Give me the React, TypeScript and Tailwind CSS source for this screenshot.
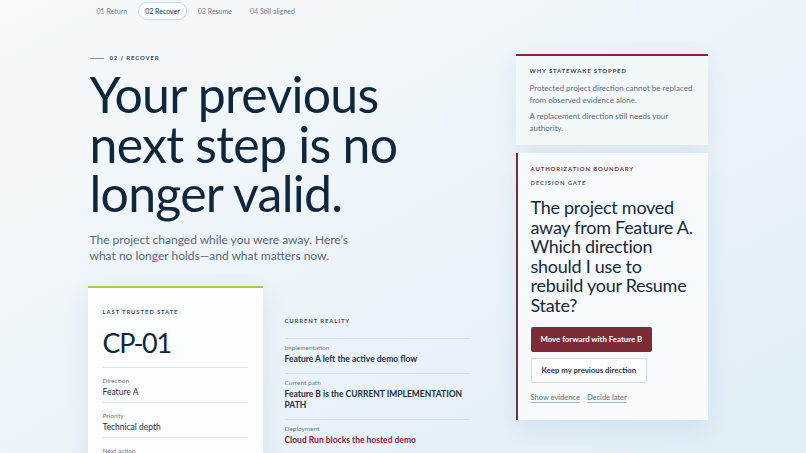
import React from 'react';

const steps = [
  { id: '01', label: 'Return' },
  { id: '02', label: 'Recover', active: true },
  { id: '03', label: 'Resume' },
  { id: '04', label: 'Still aligned' },
];

const trusted = [
  { label: 'Direction', value: 'Feature A' },
  { label: 'Priority', value: 'Technical depth' },
  { label: 'Next action', value: 'Continue Feature A' },
];

const reality = [
  { label: 'Implementation', value: 'Feature A left the active demo flow' },
  { label: 'Current path', value: 'Feature B is the CURRENT IMPLEMENTATION PATH' },
  { label: 'Deployment', value: 'Cloud Run blocks the hosted demo', alert: true },
];

const question = [
  'The project moved',
  'away from Feature A.',
  'Which direction',
  'should I use to',
  'rebuild your Resume',
  'State?',
];

const Eyebrow: React.FC<{ children: React.ReactNode; className?: string }> = ({ children, className }) => (
  <div className={`text-[6px] font-bold uppercase leading-[8px] tracking-[0.14em] ${className ?? 'text-[#3f4f63]'}`}>
    {children}
  </div>
);

export default function App() {
  return (
    <div className="min-h-[892px] w-full bg-[linear-gradient(150deg,#f7f9fb_0%,#ecf4f9_35%,#dfeef7_65%,#d8e9f3_100%)] font-['Lato',sans-serif] text-[#12263b]">
      <div className="w-[797px]">
        <div className="mx-auto w-[618px] pt-[2px]">
          <nav className="flex gap-[4px]">
            {steps.map((s) => (
              <span
                key={s.id}
                className={`flex h-[18px] items-center rounded-full border px-[6px] text-[7px] ${
                  s.active ? 'border-[#cfd9e2] bg-white/70 text-[#1f3348]' : 'border-transparent text-[#6b7a8a]'
                }`}
              >
                {s.id} {s.label}
              </span>
            ))}
          </nav>

          <div className="mt-[34px] grid grid-cols-[380px_192px] gap-x-[46px]">
            <div>
              <div className="flex items-center gap-[6px]">
                <span className="h-px w-[14px] bg-[#8d86c4]" />
                <Eyebrow className="text-[#34465b]">02 / Recover</Eyebrow>
              </div>

              <h1 className="mt-[8px] text-[50px] font-normal leading-[49.5px] tracking-[-0.015em] text-[#10263d]">
                Your previous
                <br />
                next step is no
                <br />
                longer valid.
              </h1>

              <p className="mt-[13px] text-[12px] leading-[16px] text-[#56677a]">
                The project changed while you were away. Here’s
                <br />
                what no longer holds—and what matters now.
              </p>

              <div className="mt-[22px] -ml-[2px] flex gap-[22px]">
                <div className="w-[175px] border-t-2 border-[#a8c95a] bg-[#fcfdfe] px-[15px] pb-[30px] pt-[20px] shadow-[0_8px_24px_rgba(30,60,90,0.09)]">
                  <Eyebrow>Last trusted state</Eyebrow>
                  <div className="mt-[11px] text-[27px] leading-[32px] tracking-[-0.05em] text-[#10263d]">CP-01</div>
                  <div className="mt-[8px]">
                    {trusted.map((row) => (
                      <div key={row.label} className="border-t border-[#dfe6ec] pb-[3px] pt-[8px]">
                        <div className="text-[6.5px] leading-[10px] text-[#6b7a8a]">{row.label}</div>
                        <div className="text-[8.5px] leading-[13px] text-[#1c2f44]">{row.value}</div>
                      </div>
                    ))}
                  </div>
                </div>

                <div className="flex-1 pt-[31px]">
                  <Eyebrow>Current reality</Eyebrow>
                  <div className="mt-[13px]">
                    {reality.map((row) => (
                      <div key={row.label} className="border-t border-[#d3dde6] pb-[8px] pt-[4px]">
                        <div className="text-[6.5px] leading-[10px] text-[#6b7a8a]">{row.label}</div>
                        <div
                          className={`mt-[1px] text-[8.5px] font-bold leading-[11px] ${
                            row.alert ? 'text-[#7f2a37]' : 'text-[#1c2f44]'
                          }`}
                        >
                          {row.value}
                        </div>
                      </div>
                    ))}
                  </div>
                </div>
              </div>
            </div>

            <div className="flex flex-col gap-[8px]">
              <section className="border-t-2 border-[#7f2a37] bg-[#f3f8fb] px-[14px] pb-[11px] pt-[11px] shadow-[0_8px_24px_rgba(30,60,90,0.08)]">
                <Eyebrow className="text-[#34465b]">Why StateWake stopped</Eyebrow>
                <p className="mt-[7px] text-[8px] leading-[12px] text-[#5b6b7c]">
                  Protected project direction cannot be replaced from observed evidence alone.
                </p>
                <p className="mt-[4px] text-[8px] leading-[12px] text-[#5b6b7c]">
                  A replacement direction still needs your authority.
                </p>
              </section>

              <section className="border-l-2 border-[#7f2a37] bg-[#f7fafc] pb-[17px] pl-[13px] pr-[4px] pt-[12px] shadow-[0_8px_24px_rgba(30,60,90,0.08)]">
                <Eyebrow className="text-[#7f2a37]">Authorization boundary</Eyebrow>
                <Eyebrow className="mt-[6px] text-[#4a5a6d]">Decision gate</Eyebrow>
                <h2 className="mt-[11px] text-[18px] font-normal leading-[19.5px] tracking-[-0.015em] text-[#17293d]">
                  {question.map((line) => (
                    <span key={line} className="block whitespace-nowrap">
                      {line}
                    </span>
                  ))}
                </h2>
                <button className="mt-[12px] flex h-[25px] items-center rounded-[2px] bg-[#7d2b37] px-[10px] text-[7.8px] font-bold text-white">
                  Move forward with Feature B
                </button>
                <button className="mt-[6px] flex h-[25px] items-center border border-[#d3dce4] bg-white px-[10px] text-[7.8px] font-bold text-[#1f3348]">
                  Keep my previous direction
                </button>
                <div className="mt-[10px] flex gap-[7px] text-[7.5px] leading-[10px] text-[#5b6b7c]">
                  <span className="underline decoration-[#aab6c2] underline-offset-2">Show evidence</span>
                  <span className="underline decoration-[#aab6c2] underline-offset-2">Decide later</span>
                </div>
              </section>
            </div>
          </div>
        </div>
      </div>
    </div>
  );
}
